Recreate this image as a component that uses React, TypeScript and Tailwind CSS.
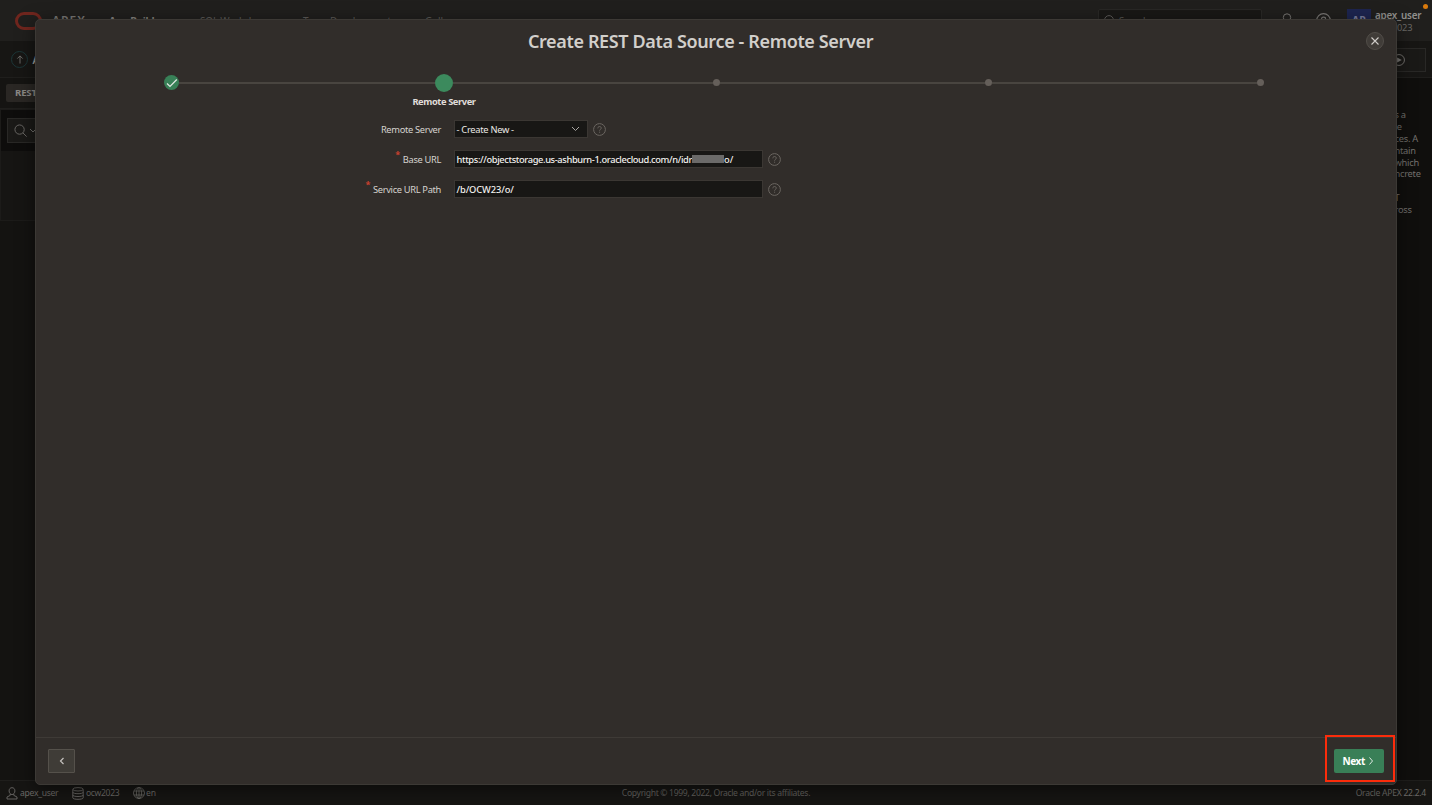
import type { ReactNode } from "react";

const helpLines = ["s a", "le", "ces. A", "ntain", "which", "ncrete", "", "T", "ross"];

function HelpIcon({ className = "" }: { className?: string }) {
  return (
    <svg viewBox="0 0 13 13" className={`h-[13px] w-[13px] shrink-0 ${className}`} fill="none" stroke="currentColor">
      <circle cx="6.5" cy="6.5" r="5.9" />
      <path d="M4.8 5.3c0-2.4 3.5-2.2 3.5-.2 0 1.2-1.7 1.3-1.7 2.5M6.6 8.7v1" />
    </svg>
  );
}

function TopNav() {
  return (
    <header className="flex h-[41px] shrink-0 bg-[#201f1d] text-[#787673]">
      <div className="flex w-[109px] items-center pl-[15px]">
        <div className="h-[18px] w-[27px] shrink-0 rounded-full border-[3px] border-[#70261e]" />
        <span className="ml-[10px] pt-[1px] text-[12px] font-semibold tracking-[1px]">APEX</span>
      </div>
      <nav className="flex items-center pt-[2px] text-[10px] text-[#5d5b58]">
        <span className="w-[91px] font-bold tracking-[-0.25px] text-[#85837f]">App Builder</span>
        <span className="w-[103px] tracking-[-0.2px]">SQL Workshop</span>
        <span className="w-[122px] tracking-[-0.2px]">Team Development</span>
        <span>Gallery</span>
      </nav>
      <div className="ml-auto flex">
        <div className="mt-[9px] flex h-[24px] w-[164px] items-center gap-[3px] rounded-[2px] border border-[#292826] bg-[#191816] pl-[5px] text-[9.4px] text-[#5d5b58]">
          <svg viewBox="0 0 12 12" className="h-3 w-3" fill="none" stroke="currentColor">
            <circle cx="5" cy="5" r="4.4" />
            <path d="m8.3 8.3 3 3" />
          </svg>
          Search
        </div>
        <svg viewBox="0 0 12 16" className="mt-[13px] ml-[19px] h-4 w-3" fill="none" stroke="currentColor">
          <circle cx="6" cy="4.5" r="3.7" />
          <path d="M1 15c0-4 2-5 5-5s5 1 5 5" />
        </svg>
        <HelpIcon className="mt-[13px] ml-[23px] h-[15px] w-[15px]" />
        <div className="mt-[9px] ml-[16px] flex h-[24px] w-[24px] items-center justify-center bg-[#1d2550] text-[10.5px] font-bold text-[#777c9a]">
          AP
        </div>
        <div className="mt-[10px] ml-[4px] w-[57px] text-[9.8px] leading-[12px] tracking-[-0.2px] whitespace-nowrap">
          <div className="font-semibold text-[#92908d]">apex_user</div>
          <div className="text-[9.3px] text-[#6b6966]">ocw2023</div>
        </div>
      </div>
    </header>
  );
}

function Workspace() {
  return (
    <div className="flex min-h-0 grow">
      <div className="w-[1390px]">
        <div className="h-[31px] border-b border-[#1f1e1c] bg-[#151412] px-[6px] pt-[6px]">
          <div className="flex h-[18px] w-[140px] items-center rounded-[2px] bg-[#2a2724] pt-[1px] pl-[9px] text-[9.6px] font-bold tracking-[-0.15px] text-[#8b8985]">
            REST Data Sources
          </div>
        </div>
        <div className="h-[112px] w-[1380px] border border-[#1c1b19] bg-[#161513]">
          <div className="h-[41px] bg-[#0e0d0c] pt-[8px] pl-[6px]">
            <div className="flex h-[25px] w-[200px] items-center gap-[2px] border border-[#292826] bg-[#1a1917] pl-[6px] text-[#6d6b68]">
              <svg viewBox="0 0 14 14" className="h-[13px] w-[13px]" fill="none" stroke="currentColor">
                <circle cx="6" cy="6" r="5" />
                <path d="m9.6 9.6 4 4" />
              </svg>
              <svg viewBox="0 0 8 6" className="h-[6px] w-[8px]" fill="none" stroke="currentColor">
                <path d="m1 1 3 3 3-3" />
              </svg>
            </div>
          </div>
        </div>
      </div>
      <aside className="grow bg-[#100f0d] pt-[31px] pl-[4.5px] text-[9.3px] leading-[11.9px] tracking-[-0.25px] text-[#73716e]">
        {helpLines.map((line, i) => (
          <div key={i} className="h-[11.9px] whitespace-nowrap">
            {line}
          </div>
        ))}
      </aside>
    </div>
  );
}

function Footer() {
  return (
    <footer className="grid h-[25px] shrink-0 grid-cols-3 items-center border-t border-[#1f1e1c] bg-[#161513] px-[6px] text-[8.6px] text-[#6b6966]">
      <div className="flex items-center">
        <svg viewBox="0 0 12 13" className="mr-[2px] h-[13px] w-[12px]" fill="none" stroke="currentColor" strokeWidth=".9">
          <path d="M6 .7c1.8 0 2.9 1.3 2.9 3.2S7.600 7.600 6 7.600 3.100 5.800 3.100 3.900 4.200.7 6 .7ZM4.200 7v1.400L1 10v2h10v-2L7.800 8.400V7" />
        </svg>
        <span className="w-[52px] tracking-[-0.3px]">apex_user</span>
        <svg viewBox="0 0 12 13" className="mr-[2px] h-[13px] w-[12px]" fill="none" stroke="currentColor" strokeWidth=".9">
          <ellipse cx="6" cy="2.300" rx="5.200" ry="1.700" />
          <path d="M.8 2.300v8.500c0 2 10.400 2 10.400 0V2.300M.8 5.200c0 2 10.400 2 10.400 0M.8 8c0 2 10.400 2 10.400 0" />
        </svg>
        <span className="w-[47px] tracking-[-0.35px]">ocw2023</span>
        <svg viewBox="0 0 12 12" className="mr-[1px] h-[12px] w-[12px]" fill="none" stroke="currentColor" strokeWidth=".8">
          <circle cx="6" cy="6" r="5.500" />
          <ellipse cx="6" cy="6" rx="2.600" ry="5.500" />
          <path d="M6 .5v11M1 4h10M1 8h10" />
        </svg>
        <span className="tracking-[-0.2px]">en</span>
      </div>
      <div className="text-center tracking-[-0.33px] text-[#62605d]">
        Copyright © 1999, 2022, Oracle and/or its affiliates.
      </div>
      <div className="text-right tracking-[-0.28px]">Oracle APEX 22.2.4</div>
    </footer>
  );
}

function Steps() {
  return (
    <div className="grid grid-cols-5">
      {[0, 1, 2, 3, 4].map((i) => (
        <div key={i} className="flex flex-col items-center">
          <div className="flex h-[19px] w-full items-center">
            <div className={`h-[2px] grow basis-0 ${i > 0 ? "bg-[#494540]" : ""}`} />
            {i === 0 && (
              <div className="-ml-px flex h-[15px] w-[15px] items-center justify-center rounded-full bg-[#388057]">
                <svg viewBox="0 0 12 10" className="h-[10px] w-[12px]" fill="none" stroke="#e4e9e5" strokeWidth="1.2">
                  <path d="m1 5.500 3 3L10.800 1.500" />
                </svg>
              </div>
            )}
            {i === 1 && <div className="h-[18px] w-[18px] rounded-full bg-[#3c8a5d]" />}
            {i > 1 && <div className="h-[7px] w-[7px] rounded-full bg-[#655f5a]" />}
            <div className={`h-[2px] grow basis-0 ${i < 4 ? "bg-[#494540]" : ""}`} />
          </div>
          {i === 1 && (
            <div className="mt-[3px] text-[9.3px] leading-[14px] font-bold tracking-[-0.4px] text-[#e0dedb]">Remote Server</div>
          )}
        </div>
      ))}
    </div>
  );
}

function Field({ label, required, children }: { label: string; required?: boolean; children: ReactNode }) {
  return (
    <div className="flex h-[30px] items-center">
      <label className="flex w-[405px] items-center justify-end gap-[3px] pt-[1px] text-[9.3px] tracking-[-0.33px] text-[#d6d3cf]">
        {required && <span className="mb-[11px] text-[9px] leading-none font-bold text-[#c9402f]">*</span>}
        <span>{label}</span>
      </label>
      <div className="ml-[12.5px] flex items-center gap-[5.5px] text-[#6b6661]">
        {children}
        <HelpIcon />
      </div>
    </div>
  );
}

function Dialog() {
  return (
    <section className="absolute top-[19px] left-[35px] flex h-[766px] w-[1362px] flex-col rounded-[5px] border border-[#3c3935] bg-[#312d2a] shadow-[0_4px_18px_rgba(0,0,0,0.5)]">
      <h1 className="mt-[9px] pr-[31px] text-center text-[18px] leading-[24px] font-semibold tracking-[-0.36px] text-[#d2cfcb]">
        Create REST Data Source - Remote Server
      </h1>
      <button className="absolute top-[12px] right-[12px] flex h-[18px] w-[18px] items-center justify-center rounded-full border border-[#514d48] bg-[#403c38]">
        <svg viewBox="0 0 10 10" className="h-[10px] w-[10px]" stroke="#d0cdc9" strokeWidth="1.1">
          <path d="m1.500 1.500 7 7M8.500 1.500l-7 7" />
        </svg>
      </button>
      <div className="mt-[20px]">
        <Steps />
      </div>
      <div className="mt-[5px] flex grow flex-col">
        <Field label="Remote Server">
          <div className="flex h-[18px] w-[134px] items-center justify-between border border-[#3b3733] bg-[#181715] pr-[7px] pl-[2px] text-[9.3px] tracking-[-0.28px] text-[#eceae7]">
            <span className="pt-[1px]">- Create New -</span>
            <svg viewBox="0 0 9 6" className="h-[6px] w-[9px]" fill="none" stroke="#aaa7a3">
              <path d="m1 1 3.500 3.500L8 1" />
            </svg>
          </div>
        </Field>
        <Field label="Base URL" required>
          <div className="flex h-[18px] w-[309px] items-center border border-[#3b3733] bg-[#181715] pl-[2px] text-[9.3px] font-medium text-[#f3f1ee]">
            <span className="pt-[1px] tracking-[-0.37px]">https://objectstorage.us-ashburn-1.oraclecloud.com/n/idr</span>
            <span className="h-[8px] w-[32px] bg-[#6b6a69]" />
            <span className="pt-[1px]">o/</span>
          </div>
        </Field>
        <Field label="Service URL Path" required>
          <div className="flex h-[18px] w-[309px] items-center border border-[#3b3733] bg-[#181715] pt-[1px] pl-[2px] text-[9.3px] font-medium tracking-[-0.1px] text-[#f3f1ee]">
            /b/OCW23/o/
          </div>
        </Field>
      </div>
      <div className="flex h-[47px] shrink-0 items-center justify-between border-t border-[#3e3a36] pr-[12px] pb-[1px] pl-[12px]">
        <button className="flex h-[24px] w-[27px] items-center justify-center rounded-[1px] border border-[#55514b] bg-[#3f3c37]">
          <svg viewBox="0 0 6 8" className="h-[8px] w-[6px]" fill="none" stroke="#c5c2be" strokeWidth="1.200">
            <path d="M4.500 1 1.500 4l3 3" />
          </svg>
        </button>
        <button className="flex h-[24px] w-[50px] items-center gap-[3px] rounded-[2px] bg-[#397f57] pl-[8.5px] text-[10px] font-bold tracking-[-0.4px] text-white">
          <span className="pt-[1px]">Next</span>
          <svg viewBox="0 0 6 8" className="h-[8px] w-[6px]" fill="none" stroke="#dce9e1" strokeWidth="1">
            <path d="m1.500 .5 3 3.500-3 3.500" />
          </svg>
        </button>
      </div>
      <div className="absolute top-[715px] right-[1px] h-[47px] w-[70px] border-2 border-[#fb2c0b]" />
    </section>
  );
}

export default function App() {
  return (
    <div className="relative flex h-[805px] w-[1432px] flex-col overflow-hidden bg-[#141311] font-['Noto_Sans','Open_Sans',sans-serif]">
      <TopNav />
      <div className="flex h-[37px] shrink-0 items-center border-b border-[#1f1e1c] bg-[#171614] pt-[1px] pr-[6px] pl-[11px]">
        <div className="flex h-[17px] w-[17px] items-center justify-center rounded-full border border-[#1c3638]">
          <svg viewBox="0 0 8 10" className="h-[9px] w-[8px]" fill="none" stroke="#73716e">
            <path d="M4 9.500V1M1 4l3-3 3 3" />
          </svg>
        </div>
        <span className="ml-[4.5px] pt-[1px] text-[10px] font-semibold text-[#a3a19d]">Application</span>
        <div className="ml-auto flex h-[24px] w-[60px] items-center justify-end border border-[#292826] bg-[#1a1917] pr-[20px]">
          <svg viewBox="0 0 13 13" className="h-[12px] w-[12px]" fill="none" stroke="#777572">
            <circle cx="6.500" cy="6.500" r="5.900" />
            <path d="m4.500 3.800 5 2.700-5 2.700Z" fill="#777572" stroke="none" />
          </svg>
        </div>
      </div>
      <Workspace />
      <Footer />
      <div className="absolute top-[4px] right-[4px] h-[5px] w-[5px] rounded-full bg-[#d97a0c]" />
      <Dialog />
    </div>
  );
}
